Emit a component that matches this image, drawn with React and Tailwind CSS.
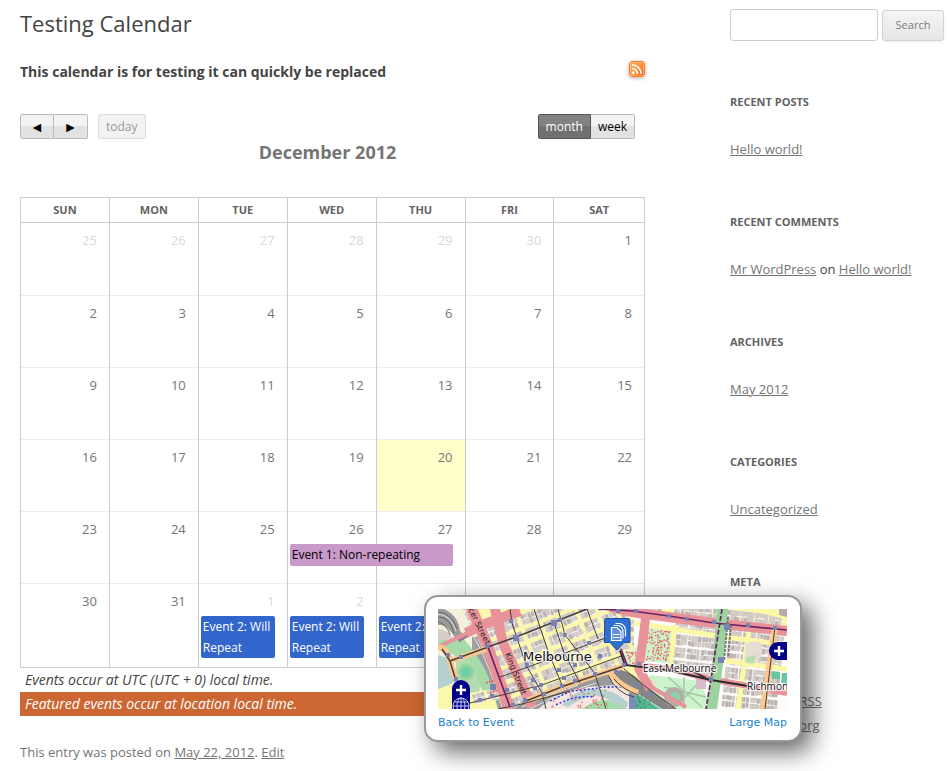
const sans = "font-['Open_Sans','Liberation_Sans',sans-serif]";

const WEEKS = [
  [25, 26, 27, 28, 29, 30, 1],
  [2, 3, 4, 5, 6, 7, 8],
  [9, 10, 11, 12, 13, 14, 15],
  [16, 17, 18, 19, 20, 21, 22],
  [23, 24, 25, 26, 27, 28, 29],
  [30, 31, 1, 2, 3, 4, 5],
];
const DAYS = ["Sun", "Mon", "Tue", "Wed", "Thu", "Fri", "Sat"];
const ROW_HEIGHTS = ["h-[73px]", "h-[72px]", "h-[72px]", "h-[72px]", "h-[72px]", "h-[84px]"];

const link = "text-[#757575] underline";

// Small repeatable generator so that the building blocks stay the same between renders.
function makeRandom(seed) {
  let s = seed;
  return () => {
    s = (s * 16807) % 2147483647;
    return s / 2147483647;
  };
}

function Blocks({ x, y, cols, rows, w, h, gapX, gapY, seed, angle }) {
  const rnd = makeRandom(seed);
  const out = [];
  for (let r = 0; r < rows; r++) {
    for (let c = 0; c < cols; c++) {
      const bx = x + c * (w + gapX);
      const by = y + r * (h + gapY);
      out.push(<rect key={`b${r}-${c}`} x={bx} y={by} width={w} height={h} fill="#f8f5f3" />);
      for (let i = 0; i < 2; i++) {
        for (let j = 0; j < 4; j++) {
          const cw = w / 4;
          const ch = h / 2;
          out.push(
            <rect
              key={`r${r}-${c}-${i}-${j}`}
              x={bx + j * cw + 0.4}
              y={by + i * ch + 0.4}
              width={cw * (0.6 + rnd() * 0.35)}
              height={ch * (0.6 + rnd() * 0.3)}
              fill={rnd() > 0.35 ? "#d8d0ca" : "#bcb3b0"}
              stroke="#b5aca8"
              strokeWidth="0.4"
            />
          );
        }
      }
    }
  }
  return <g transform={`rotate(${angle} ${x} ${y})`}>{out}</g>;
}

function Dots({ x, y, w, h, n, seed, color }) {
  const rnd = makeRandom(seed);
  return Array.from({ length: n }, (_, i) => (
    <rect key={i} x={x + rnd() * w} y={y + rnd() * h} width="1.300" height="1.300" fill={color} />
  ));
}

const STATIONS = [
  [73, 12, 4], [78, 29, 6], [116, 14, 6], [122, 11, 4], [127, 26, 4], [49, 37, 4], [151, 34, 4], [162, 47, 4],
  [23, 48, 4], [10, 46, 4], [18, 70, 4], [55, 78, 6], [69, 81, 4], [54, 87, 4], [42, 91, 4], [89, 56, 4],
  [95, 71, 4], [97, 79, 4], [103, 76, 4], [106, 85, 4], [121, 61, 4], [126, 69, 4], [137, 56, 4], [137, 72, 4],
  [124, 77, 4], [157, 65, 4], [87, 91, 4], [75, 96, 4], [180, 2, 4], [198, 2, 4], [231, 7, 4], [249, 10, 4],
  [276, 13, 4], [289, 18, 6], [310, 16, 4], [337, 19, 4], [283, 51, 6], [273, 70, 4], [201, 55, 4], [197, 76, 4],
  [211, 85, 4], [186, 56, 4], [178, 63, 4],
];

function MapPicture() {
  return (
    <svg
      className="block h-[100px] w-full"
      viewBox="0 0 349 100"
      preserveAspectRatio="xMidYMid slice"
      role="img"
      aria-label="Map of Melbourne"
    >
      <rect width="349" height="100" fill="#fbf8ad" />
      {/* City blocks */}
      <Blocks x={46} y={20} cols={9} rows={6} w={15} h={11} gapX={4} gapY={4} seed={17} angle={-21} />
      <Blocks x={84} y={-8} cols={6} rows={2} w={14} h={10} gapX={5} gapY={4} seed={29} angle={-21} />
      {/* West side yards and parks */}
      <path d="M0 0H30L50 38L70 100H0Z" fill="#f4f0dc" />
      <Blocks x={22} y={-6} cols={1} rows={3} w={12} h={9} gapX={2} gapY={2} seed={5} angle={-24} />
      <path d="M0 0H6Q20 6 22 22L28 28L18 30Q8 14 0 16Z" fill="#9b9b9b" />
      <path d="M0 20Q8 20 14 28L8 34L0 36Z" fill="#d6cdc9" />
      <path d="M34 28Q44 26 48 36L70 100H58Q50 60 34 42Z" fill="#9f9f9f" />
      <path d="M0 32L24 28Q44 50 52 72L62 90L54 94Q44 82 38 70Q26 48 0 38Z" fill="#a5dba8" />
      <path d="M0 46L12 50L18 72L0 82Z" fill="#b5d0d0" />
      <path d="M18 52L32 50L42 74L40 100H18Z" fill="#b4dcae" />
      <circle cx="28" cy="63" r="8.500" fill="#9ad4a0" />
      <circle cx="28" cy="63" r="5.500" fill="#6fd0a8" />
      <path d="M0 80L16 74V100H0ZM32 84L54 80L60 100H32Z" fill="#fbf8ad" />
      <Blocks x={34} y={86} cols={2} rows={1} w={12} h={10} gapX={3} gapY={3} seed={8} angle={-16} />
      <g stroke="#4a4a4a" strokeWidth="0.7" fill="none">
        <path d="M0 3Q14 4 19 20M0 8Q12 8 16 24M0 13Q8 14 12 26" />
      </g>
      <g stroke="#e6e6e6" strokeWidth="0.9" fill="none">
        <path d="M0 5Q13 6 18 22M36 28Q52 56 64 98M40 30Q54 56 67 98" />
      </g>
      <path d="M20 31L30 25" stroke="#8d7b95" strokeWidth="5" />
      <path d="M48 74L60 70M52 84L64 80" stroke="#e86a62" strokeWidth="2" strokeDasharray="2 1" />
      {/* South bank */}
      <path d="M80 100L112 84L182 60L205 78L240 100Z" fill="#f0e8e2" />
      <path d="M76 100L88 91L130 76L168 64L176 76L150 78L116 88L100 100Z" fill="#9a9a9a" />
      <path d="M84 98L112 86L140 76M92 100L116 88L158 74" stroke="#e9e9e9" strokeWidth="1" fill="none" />
      <path d="M104 100L122 88L180 78L200 90L198 100Z" fill="#f6e6e1" />
      <path d="M124 96Q140 78 158 80Q176 80 190 94L188 100H180Q170 86 156 87Q144 88 130 98Z" fill="#b5d0d0" />
      <path d="M144 100Q160 88 172 92L188 100Z" fill="#a5dba8" />
      <Dots x={110} y={78} w={60} h={20} n={60} seed={55} color="#e35d5d" />
      <g fill="none" stroke="#2424f0" strokeWidth="1.300" strokeDasharray="2 2">
        <path d="M112 92Q124 86 134 82L154 80L166 78L194 78L222 81L234 84V92" />
        <path d="M118 96Q136 86 156 88" />
      </g>
      {/* East side */}
      <path d="M196 8L349 26V100H240L196 60Z" fill="#fdfcfb" />
      <Blocks x={238} y={12} cols={3} rows={4} w={13} h={11} gapX={1} gapY={2} seed={61} angle={6} />
      <Blocks x={292} y={16} cols={4} rows={6} w={13} h={12} gapX={1} gapY={2} seed={73} angle={6} />
      <Blocks x={206} y={-8} cols={10} rows={1} w={13} h={12} gapX={1} gapY={3} seed={79} angle={6} />
      <path d="M210 18L235 22L232 54L204 52Z" fill="#cdf0cd" />
      <path d="M186 44L202 36L200 56L190 54Z" fill="#dff0cc" />
      <Dots x={208} y={20} w={24} h={31} n={130} seed={91} color="#e8605c" />
      <Dots x={188} y={41} w={12} h={13} n={26} seed={92} color="#e8605c" />
      <path d="M212 66L262 72L274 100H214L204 82Z" fill="#cdf3cd" />
      <g stroke="#a5c9a6" strokeWidth="1.500" fill="none">
        <path d="M230 68L264 98M262 72L238 98M246 68V100M226 78L268 88" />
      </g>
      <path d="M258 68H268V80H258Z" fill="#d9bccb" />
      <path d="M204 70L218 72L216 84L206 82Z" fill="#eadfd3" />
      <path d="M180 60Q196 64 204 74L238 100H224L196 82L176 66Z" fill="#858585" />
      <path d="M198 84L222 100H198Z" fill="#55b591" />
      <Dots x={198} y={86} w={14} h={13} n={16} seed={97} color="#3b7f6c" />
      <path d="M191 76L198 80V100H191Z" fill="#7690b5" />
      <circle cx="236" cy="88" r="10" fill="#b7a9a4" />
      <circle cx="237" cy="88" r="5.500" fill="#8bd0ad" />
      <g fill="none" stroke="#fbf8a6" strokeWidth="5">
        <path d="M196 14L286 28L349 36M237 16L232 60M311 20L300 100M288 52L349 60M316 0L349 8M224 0L236 2" />
      </g>
      <path d="M308 34L322 32L324 46L314 56L306 52Z" fill="#e6ded4" />
      <path d="M308 48L318 46L316 54L308 54Z" fill="#b9dfae" />
      <path d="M334 62L342 63V70L334 70ZM344 64H349V76L343 74Z" fill="#68c7a3" />
      <path d="M341 0H349V8L341 6Z" fill="#baa9a6" />
      {/* Main roads */}
      <g fill="none" stroke="#e8929a">
        <path d="M32 -4L50 38L72 102" strokeWidth="11" />
        <path d="M56 -4L65 34L94 98" strokeWidth="10" />
        <path d="M0 38L38 20" strokeWidth="4" />
        <path d="M28 24L44 16L82 2" strokeWidth="10" />
        <path d="M172 -2L200 4L276 14L349 22" strokeWidth="10" />
        <path d="M208 6L201 60L212 80" strokeWidth="9" />
        <path d="M196 56L234 60L272 70L349 84" strokeWidth="6" />
        <path d="M206 74L248 98" strokeWidth="4" />
      </g>
      <g fill="none" stroke="#fbc98f" strokeWidth="6">
        <path d="M0 38Q10 40 12 52L18 70M12 52L48 40" />
        <path d="M88 92L126 77L186 57M172 62Q176 74 200 84M337 18L325 100" />
      </g>
      <path d="M290 0H279L274 60L268 100H279L285 56Z" fill="#9bd29d" />
      {/* Tram and rail lines */}
      <g fill="none" stroke="#45403c" strokeWidth="1">
        <path d="M12 52L50 38L78 28L149 0M18 72L12 52L4 40" strokeWidth="1.600" />
        <path d="M62 68L90 58L170 28M32 94L104 76L186 46" />
        <path d="M88 92L126 77L186 57" strokeWidth="1.600" />
        <path d="M72 0L74 14L88 56L104 84L108 100M96 0L110 42L124 76" />
        <path d="M116 14L126 44L142 74M120 0L127 26L146 50L157 65L168 100" />
        <path d="M160 30L149 0M176 70Q184 80 200 86M170 66Q178 84 196 88" />
        <path d="M186 60L208 78L238 100M60 100L84 95L132 82M337 18L327 100" />
      </g>
      <g fill="none" stroke="#2b2b2b" strokeWidth="1.800">
        <path d="M182 42L187 56L234 62L273 71L310 77M256 63L268 69" />
      </g>
      <g fill="none" stroke="#6b2463" strokeWidth="1.700">
        <path d="M50 38L72 98M160 0L194 2L231 7L276 14L349 21M183 40L189 56" />
        <path d="M284 0L273 70L268 100" strokeDasharray="5 2" />
      </g>
      <path d="M290 8L286 52M293 16L290 48" stroke="#777" strokeWidth="2" strokeDasharray="3 1" />
      {STATIONS.map(([cx, cy, s], i) => (
        <rect key={i} x={cx - s / 2} y={cy - s / 2} width={s} height={s} fill="#7883b4" />
      ))}
      <g fill="#111" stroke="#fff" strokeOpacity="0.75" strokeWidth="2.500" paintOrder="stroke" strokeLinejoin="round">
        <text className="font-['DejaVu_Sans',sans-serif]" x="85" y="52" fontSize="13">Melbourne</text>
        <text className={sans} x="205" y="63" fontSize="10">East Melbourne</text>
        <text className={sans} x="309" y="81" fontSize="10">Richmon</text>
      </g>
      <g className="font-['DejaVu_Sans',sans-serif]" fill="#222" fontSize="8">
        <text transform="translate(28 -4) rotate(64)">ncer Street</text>
        <text transform="translate(67 45) rotate(68)">King Street</text>
      </g>
      {/* Place marker */}
      <path d="M168 9.500H190Q192 9.500 192 11.500V33.500H186L179 41L172 33.500H166.500V11.500Q166.500 9.500 168 9.500Z" fill="#2f6fd0" stroke="#1d4f9f" />
      <g fill="none" stroke="#fff" strokeWidth="1.200">
        <path d="M173.500 18.500H179L183 22.500V31.500H173.500Z" fill="#ffffff" fillOpacity="0.25" />
        <path d="M175.500 16.500H180.500Q185 18 185 23V29.500M177.500 14.500H182Q187.500 16 187.500 22V27.500M175 25.500H181.500M175 28.500H181.500" />
      </g>
      {/* Pan and zoom controls */}
      <path d="M14 100V80A9 9 0 0 1 32 80V100Z" fill="#00008b" />
      <path d="M23 76V86M18 81H28" stroke="#fff" strokeWidth="2.400" />
      <g fill="none" stroke="#c9c9ee" strokeWidth="1">
        <circle cx="23" cy="97" r="8" />
        <ellipse cx="23" cy="97" rx="4" ry="8" />
        <path d="M23 89V100M16 93H30M15 97H31" />
      </g>
      <path d="M349 33H340A9 9 0 0 0 340 51H349Z" fill="#00008b" />
      <path d="M341 37V47M336 42H346" stroke="#fff" strokeWidth="2.400" />
    </svg>
  );
}

function FeedIcon() {
  return (
    <svg className="size-4 rounded-[3px] shadow-[0_1px_4px_rgba(0,0,0,0.3)]" viewBox="0 0 16 16" aria-hidden="true">
      <defs>
        <linearGradient id="feed" x1="0" y1="0" x2="1" y2="1">
          <stop offset="0" stopColor="#ffb066" />
          <stop offset="0.5" stopColor="#ff9440" />
          <stop offset="1" stopColor="#ff4a00" />
        </linearGradient>
      </defs>
      <rect x="0.500" y="0.500" width="15" height="15" rx="2.500" fill="url(#feed)" stroke="#fb7a1e" />
      <rect x="1.500" y="1.500" width="13" height="13" rx="1.500" fill="none" stroke="#ffc08a" strokeOpacity="0.7" />
      <circle cx="4.300" cy="11.700" r="1.500" fill="#fff" />
      <path d="M3 7.500A5.500 5.500 0 0 1 8.500 13M3 3.800A9.200 9.200 0 0 1 12.200 13" fill="none" stroke="#fff" strokeWidth="1.700" />
    </svg>
  );
}

function DayEvents({ week, day }) {
  if (week === 4 && day === 3) {
    return (
      <a href="#event-1" className="relative z-10 ml-0.5 block h-[22px] w-[calc(200%-13px)] rounded-xs bg-[#c999c9] px-0.5 text-xs leading-[21px] text-black">
        Event 1: Non-repeating
      </a>
    );
  }
  if (week === 5 && day >= 2 && day <= 4) {
    return (
      <a href="#event-2" className="mr-3 ml-0.5 block h-[42px] rounded-xs bg-[#3366cc] px-0.5 text-xs leading-[21px] text-white">
        Event 2: Will Repeat
      </a>
    );
  }
  return null;
}

function Calendar() {
  return (
    <table className="w-full table-fixed border-collapse border border-[#ccc]">
      <thead>
        <tr className="h-[25px]">
          {DAYS.map((d) => (
            <th
              key={d}
              scope="col"
              className={`border border-[#ccc] p-0 text-[11px] leading-6 font-bold text-[#636363] uppercase ${d === "Sat" ? "" : "w-[14.25%]"}`}
            >
              {d}
            </th>
          ))}
        </tr>
      </thead>
      <tbody>
        {WEEKS.map((week, w) => (
          <tr key={w} className={ROW_HEIGHTS[w]}>
            {week.map((n, d) => {
              const other = (w === 0 && n > 7) || (w === 5 && n < 7);
              const today = w === 3 && n === 20;
              return (
                <td
                  key={d}
                  className={`border-x border-t border-x-[#ccc] p-0 align-top ${w === 0 ? "border-t-[#ccc]" : "border-t-[#ededed]"} ${today ? "bg-[#ffffcc]" : ""}`}
                >
                  <div className={`h-8 pt-[5px] pr-3 text-right text-[13px] leading-6 ${other ? "text-[#d9d9d9]" : "text-[#757575]"}`}>{n}</div>
                  <DayEvents week={w} day={d} />
                </td>
              );
            })}
          </tr>
        ))}
      </tbody>
    </table>
  );
}

const lightButton = "border-[#bbb] bg-linear-to-b from-[#f3f3f3] from-50% to-[#e2e2e2] to-50% text-black";

function Toolbar() {
  return (
    <div className="flex justify-between pr-2.5 text-xs">
      <div className="flex">
        <button type="button" aria-label="Previous" className={`h-[25px] w-[34px] rounded-l-xs border text-sm leading-5 ${lightButton}`}>◄</button>
        <button type="button" aria-label="Next" className={`h-[25px] w-[34px] rounded-r-xs border border-l-0 text-sm leading-5 ${lightButton}`}>►</button>
        <button type="button" disabled className="ml-2.5 h-[25px] rounded-xs border border-[#ddd] bg-[#f2f2f2] px-[7px] text-[#999]">today</button>
      </div>
      <div className="flex">
        <button type="button" aria-pressed="true" className="h-[25px] rounded-l-xs border border-[#555] bg-linear-to-b from-[#828282] from-50% to-[#707070] to-50% px-[7px] text-white">month</button>
        <button type="button" aria-pressed="false" className={`h-[25px] rounded-r-xs border border-l-0 px-[7px] ${lightButton}`}>week</button>
      </div>
    </div>
  );
}

function Widget({ title, children }) {
  return (
    <section className="mb-[49px]">
      <h3 className="mb-[23px] text-[11px] leading-6 font-bold text-[#636363] uppercase">{title}</h3>
      <ul className="text-[13px] leading-6 text-[#444]">{children}</ul>
    </section>
  );
}

function Sidebar() {
  return (
    <aside className="w-[220px] shrink-0 pt-[9px]">
      <form className="mb-12 flex h-[33px] items-start" onSubmit={(e) => e.preventDefault()}>
        <input type="text" aria-label="Search" className="h-8 w-[148px] rounded-[3px] border border-[#ccc] px-2 text-xs" />
        <button type="submit" className="mt-px ml-1 h-[31px] w-[62px] rounded-[3px] border border-[#d2d2d2] bg-linear-to-b from-[#f4f4f4] to-[#e6e6e6] text-[11px] text-[#7c7c7c] shadow-[0_1px_2px_rgba(64,64,64,0.1)]">
          Search
        </button>
      </form>
      <Widget title="Recent Posts">
        <li><a href="#hello" className={link}>Hello world!</a></li>
      </Widget>
      <Widget title="Recent Comments">
        <li><a href="#mr" className={link}>Mr WordPress</a> on <a href="#hello" className={link}>Hello world!</a></li>
      </Widget>
      <Widget title="Archives">
        <li><a href="#may" className={link}>May 2012</a></li>
      </Widget>
      <Widget title="Categories">
        <li><a href="#uncategorized" className={link}>Uncategorized</a></li>
      </Widget>
      <Widget title="Meta">
        <li><a href="#admin" className={link}>Site Admin</a></li>
        <li><a href="#logout" className={link}>Log out</a></li>
        <li><a href="#entries" className={link}>Entries RSS</a></li>
        <li><a href="#comments" className={link}>Comments RSS</a></li>
        <li><a href="#wordpress" className={link}>WordPress.org</a></li>
      </Widget>
    </aside>
  );
}

export default function App() {
  return (
    <div className={`relative flex h-screen gap-[85px] overflow-hidden bg-white pl-5 text-[#444] ${sans}`}>
      <main className="min-w-0 flex-1 pt-[7px]">
        <h1 className="text-[22px] leading-8">Testing Calendar</h1>
        <div className="mt-[21px] mb-[30px] flex h-6 items-center justify-between">
          <h2 className="text-sm leading-6 font-bold">This calendar is for testing it can quickly be replaced</h2>
          <a href="#feed" aria-label="Calendar feed" className="-mt-1.5 h-4"><FeedIcon /></a>
        </div>
        <Toolbar />
        <h2 className="mb-8 pr-2.5 text-center text-lg leading-[26px] font-bold text-[#757575]">December 2012</h2>
        <Calendar />
        <p className="px-[5px] text-sm leading-6 italic">Events occur at UTC (UTC + 0) local time.</p>
        <p className="bg-[#cc6633] px-[5px] text-sm leading-6 text-white italic">Featured events occur at location local time.</p>
        <footer className="mt-6 text-[13px] leading-6 text-[#757575]">
          This entry was posted on <a href="#may22" className={link}>May 22, 2012</a>. <a href="#edit" className={link}>Edit</a>
        </footer>
      </main>
      <Sidebar />
      <div className="absolute top-[595px] left-[424px] z-20 w-[378px] rounded-[14px] border-2 border-[#999] bg-white pt-3 pr-[13px] pb-[7px] pl-3 shadow-[10px_10px_25px_rgba(0,0,0,0.6)]">
        <MapPicture />
        <div className="mt-[3px] flex justify-between font-['DejaVu_Sans',sans-serif] text-[11px] leading-[21px] text-[#1982d1]">
          <a href="#event">Back to Event</a>
          <a href="#large">Large Map</a>
        </div>
      </div>
    </div>
  );
}
